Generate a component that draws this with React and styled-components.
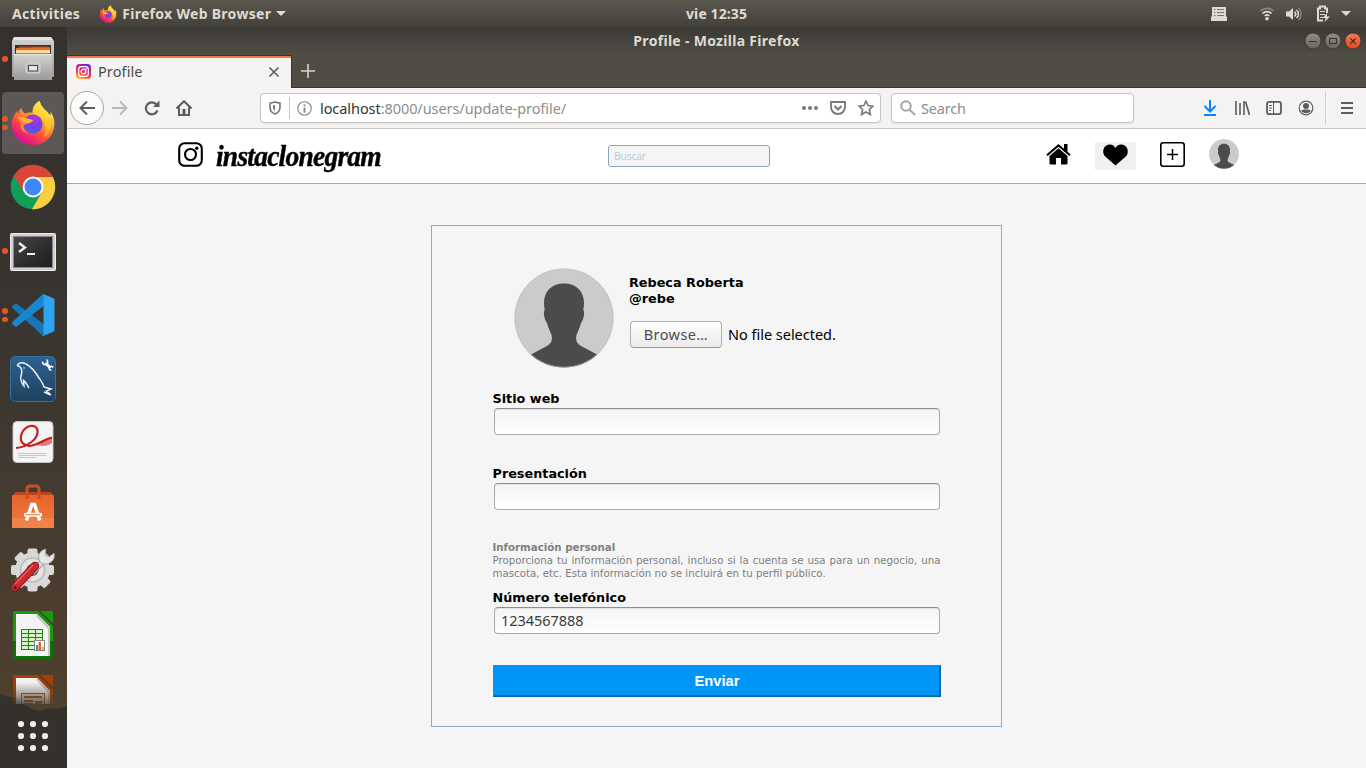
import React from "react";
import styled, { createGlobalStyle } from "styled-components";

const Global = createGlobalStyle`
  * { box-sizing: border-box; }
  body { margin: 0; background: #f5f5f5; overflow: hidden; font-family: "Noto Sans", "Open Sans", sans-serif; }
  svg { display: block; flex: none; }
  input, button { font-family: inherit; outline: none; }
`;

/* ---------- desktop shell ---------- */
const Desktop = styled.div`
  width: 1366px; height: 768px; display: flex; flex-direction: column; overflow: hidden;
`;
const TopBar = styled.header`
  height: 27px; flex: none; display: grid; grid-template-columns: 686px auto 1fr; align-items: center;
  background: linear-gradient(#5a574d, #42413b); color: #dfdbd2;
  font-size: 14px; font-weight: 700; white-space: nowrap;
`;
const TopLeft = styled.div`
  display: flex; align-items: center; padding-left: 12px;
`;
const TopText = styled.span`
  letter-spacing: ${(p) => p.$ls || 0}px;
  line-height: 20px;
`;
const AppName = styled.div`
  display: flex; align-items: center; gap: 5px; margin-left: 19px;
`;
const TopRight = styled.div`
  display: flex; align-items: center; justify-content: flex-end; padding-right: 15px;
`;
const StatusIcon = styled.span`
  display: flex; margin-left: ${(p) => p.$gap}px;
`;
const Workspace = styled.div`
  flex: 1; display: flex; min-height: 0;
`;

/* ---------- dock ---------- */
const Dock = styled.nav`
  width: 67px; flex: none; display: flex; flex-direction: column; position: relative;
  background: linear-gradient(#33302d 0, #37332f 230px, #3f3831 400px, #4a3d2f 560px, #4d402d 680px);
`;
const Mountain = styled.svg`
  position: absolute; left: 0; bottom: 0;
`;
const DockList = styled.div`
  height: 677px; overflow: hidden; position: relative;
  mask-image: linear-gradient(#000 655px, rgba(0, 0, 0, 0.2) 677px);
`;
const DockItem = styled.div`
  height: 64px; display: flex; align-items: center; justify-content: center; position: relative;
  padding-right: 1px;
`;
const DockFrame = styled.div`
  width: 62px; height: 62px; border-radius: 4px; display: flex; align-items: center; justify-content: center;
  background: ${(p) => (p.$active ? "#5b5855" : "transparent")};
`;
const Dots = styled.div`
  position: absolute; left: 2px; top: 0; height: 64px; display: flex; flex-direction: column;
  justify-content: center; gap: 3px;
`;
const Dot = styled.i`
  width: 5.5px; height: 5.5px; border-radius: 50%; background: #e95420;
`;
const AppsButton = styled.div`
  flex: 1; display: flex; align-items: center; justify-content: center; position: relative; padding-right: 1px;
`;

/* ---------- browser window ---------- */
const Window = styled.section`
  flex: 1; display: flex; flex-direction: column; min-width: 0; background: #f5f5f5;
`;
const TitleBar = styled.div`
  height: 28px; flex: none; display: grid; grid-template-columns: 1fr auto 1fr; align-items: center;
  background: linear-gradient(#3a3935, #504d45);
  color: #dfdbd2; font-size: 14px; font-weight: 700;
`;
const WinTitle = styled.span`letter-spacing: 0.3px; line-height: 20px;`;
const WinButtons = styled.div`
  display: flex; justify-content: flex-end; gap: 2px; padding-right: 4px;
`;
const TabStrip = styled.div`
  height: 33px; flex: none; display: flex; background: #504d45; border-bottom: 1px solid #35342f;
`;
const Tab = styled.div`
  width: 225px; height: 33px; display: flex; align-items: center; padding: 0 10px 1px 9px;
  background: #f4f3f2; border-top: 1px solid #35342f; border-right: 1px solid #35342f;
  box-shadow: inset 0 2px #ee7745;
  color: #4c4c4c; font-size: 14.5px;
`;
const TabTitle = styled.span`
  flex: 1; margin-left: 7px; letter-spacing: 0.1px; line-height: 20px; padding-bottom: 1px;
`;
const NewTab = styled.div`
  display: flex; align-items: center; padding: 0 0 1px 9px;
`;
const NavBar = styled.div`
  height: 41px; flex: none; display: flex; align-items: center; background: #f4f3f2;
  border-bottom: 1px solid #c9c6c3; padding-left: 3px;
`;
const BackButton = styled.div`
  width: 34px; height: 34px; border: 1px solid #a9a6a3; border-radius: 50%; background: #fcfcfc;
  display: flex; align-items: center; justify-content: center;
`;
const NavIcon = styled.div`
  display: flex; margin-left: ${(p) => p.$gap}px;
`;
const Field = styled.div`
  width: ${(p) => p.$w}px; height: 30px; margin-left: ${(p) => p.$gap}px; background: #fff;
  border: 1px solid #c6c3c0; border-radius: 4px; display: flex; align-items: center;
  box-shadow: 0 1px 2px rgba(0, 0, 0, 0.06); font-size: 14.5px; line-height: 20px; color: #8d8d8d;
`;
const Divider = styled.i`
  width: 1px; height: ${(p) => p.$h}px; background: ${(p) => p.$c || "#c6c6c6"}; margin-left: ${(p) => p.$gap}px;
`;
const Url = styled.span`
  flex: 1; margin-left: 8px; letter-spacing: -0.07px; white-space: nowrap;
  b { font-weight: 400; color: #333; }
`;
const SearchText = styled.span`margin-left: 5px; letter-spacing: -0.2px; color: #8d8d8d;`;

/* ---------- page ---------- */
const SiteHeader = styled.header`
  height: 55px; flex: none; background: #fff; border-bottom: 1px solid #8dadc2;
  display: flex; align-items: center; padding: 0 127px 0 111px;
`;
const Brand = styled.div`
  width: 430px; display: flex; align-items: center; gap: 13px; padding-bottom: 3px;
`;
const BrandName = styled.span`
  font-family: "Liberation Serif", serif; font-weight: 700; font-style: italic; font-size: 28.5px; line-height: 34px;
  color: #000; letter-spacing: -0.8px; transform-origin: 0 50%; transform: scaleX(0.965); white-space: nowrap;
  -webkit-text-stroke: 0.4px #000; padding-top: 4px;
`;
const SiteSearch = styled.input`
  width: 162px; height: 22px; padding: 0 5px; background: #f5f5f5; border: 1px solid #84a7c1; border-radius: 3px;
  font-size: 10.3px; letter-spacing: -0.2px;
  &::placeholder { color: #b2cfdf; opacity: 1; }
`;
const SiteNav = styled.div`
  margin-left: auto; display: flex; align-items: center; padding-bottom: 4px;
`;
const HeartButton = styled.div`
  width: 41px; height: 28px; margin: 4px 24px 0 24px; background: #f1f0ef; display: flex; align-items: center;
  justify-content: center; padding-bottom: 3px;
`;
const AvatarSlot = styled.div`margin-left: 24px; display: flex;`;
const Card = styled.form`
  width: 571px; height: 502px; margin: 41px 0 0 364px; border: 1px solid #8fadc0; padding: 42px 60px 0 61px;
  font-family: "DejaVu Sans", sans-serif; color: #000; display: flex; flex-direction: column;
`;
const ProfileRow = styled.div`
  display: flex; padding-left: 21px; height: 122px; gap: 15px;
`;
const Identity = styled.div`
  padding-top: 7px; font-weight: 700; font-size: 12.8px; line-height: 16px;
`;
const FileRow = styled.div`
  display: flex; align-items: center; gap: 6px; margin: 14px 0 0 1px; font: 400 14.5px/20px "Noto Sans", sans-serif;
`;
const BrowseButton = styled.button`
  width: 92px; height: 27px; padding: 0 0 2px; border: 1px solid #b4b1ad; border-bottom-color: #9b9995; border-radius: 4px;
  background: linear-gradient(#fff, #ecebe9); color: #4c4c4c; font-size: 14.5px; letter-spacing: 0.4px;
`;
const FileNote = styled.span`letter-spacing: -0.02px; padding-bottom: 2px;`;
const FormGroup = styled.label`
  display: block; height: ${(p) => p.$h}px; font-weight: 700; font-size: 12.8px; line-height: 16px;
  padding-top: ${(p) => p.$pt || 0}px; text-indent: -0.5px;
`;
const TextInput = styled.input`
  display: block; width: 446px; height: 27px; margin: 1px 0 0 1px; padding: 0 6px 1px; border: 1px solid #aaa;
  border-top-color: #8f8f8f; border-radius: 4px; background: linear-gradient(#f4f4f4, #fff);
  box-shadow: inset 0 1px 1px rgba(0, 0, 0, 0.07);
  font: 400 14.5px/20px "Noto Sans", sans-serif; color: #3c3c3c; letter-spacing: -0.05px;
`;
const Info = styled.div`
  height: 49px; width: 448px; font-size: 10.24px; line-height: 13px; color: #808080; text-align: justify;
  margin: 1px 0 0 -0.5px;
  strong { display: block; }
`;
const Submit = styled.button`
  width: 448px; height: 32px; border: 2px solid; border-color: #0095f6 #0068ac #0068ac #0095f6;
  background: #0095f6; color: #fff; font: 700 14.7px "Liberation Sans", Arial, sans-serif;
`;

/* ---------- icons ---------- */
const Person = ({ size, id }) => (
  <svg width={size} height={size} viewBox="0 0 100 100">
    <clipPath id={id}><circle cx="50" cy="50" r="49.5" /></clipPath>
    <circle cx="50" cy="50" r="49.5" fill="#cbcbcb" />
    <path clipPath={`url(#${id})`} fill="#4b4b4b" d="M50 15.500C62 15.500 70 23 70 35C70 38 69.500 40 69.300 42C71 44 70 51 67 55C65.500 60 64 63 62.500 67C61.500 72 62 75 67 78L84 87L80 101H20L16 87L33 78C38 75 38.500 72 37.500 67C36 63 34.500 60 33 55C30 51 29 44 30.700 42C30.500 40 30 38 30 35C30 23 38 15.500 50 15.500Z" />
    <circle cx="50" cy="50" r="49.2" fill="none" stroke="#c0c0c0" strokeWidth="0.6" />
  </svg>
);

const Firefox = ({ size, id }) => (
  <svg width={size} height={size} viewBox="0 0 46 48">
    <defs>
      <linearGradient id={id + "a"} x1="0.85" y1="0.1" x2="0.3" y2="0.95">
        <stop offset="0.05" stopColor="#fff44f" /><stop offset="0.35" stopColor="#ffa52c" />
        <stop offset="0.65" stopColor="#ff5338" /><stop offset="0.95" stopColor="#e31587" />
      </linearGradient>
      <linearGradient id={id + "b"} x1="0.7" y1="0" x2="0.4" y2="1">
        <stop offset="0" stopColor="#fff34a" /><stop offset="0.6" stopColor="#ffbd2c" /><stop offset="1" stopColor="#ff8038" />
      </linearGradient>
      <radialGradient id={id + "c"} cx="0.6" cy="0.25" r="0.8">
        <stop offset="0" stopColor="#b833e1" /><stop offset="0.5" stopColor="#7542e5" /><stop offset="1" stopColor="#4a5bea" />
      </radialGradient>
    </defs>
    <path fill={`url(#${id}a)`} d="M30 1C31 8 38 11 41 16C42 14 41 12 41 12C45 17 46 23 45 29C43 40 34 47 23 47C11 47 2 39 1 28C0 20 4 14 7 11C7 13 7 14 8 14C8 11 10 9 11 8C11 11 13 13 15 14C17 13 20 13 23 13C22 8 25 3 30 1Z" />
    <path fill={`url(#${id}b)`} d="M30 1C31 8 38 11 41 18C44 27 41 35 33 40C37 34 37 28 34 23C32 19 28 17 23 14C21 10 26 4 30 1Z" />
    <circle cx="23" cy="25" r="10" fill={`url(#${id}c)`} />
    <path fill="#ff8a2c" d="M6 18C12 17 15 19 23 21C22 23.500 19 24 16 25C13.500 26 12.500 27 13 29C14 32 16 34 19 35C14 35 10.500 32 10.500 28C10.500 24 9 21 6 18Z" />
    <path fill="#ffb13b" d="M7 18C13 17 15 19 23 21C22 23 19 24 16 24C12 23 11 21 7 18Z" />
  </svg>
);

const Files = () => (
  <svg width="44" height="46" viewBox="0 0 44 46">
    <defs>
      <linearGradient id="fg" x1="0" y1="0" x2="0" y2="1"><stop offset="0" stopColor="#d4d4d4" /><stop offset="1" stopColor="#9a9a9a" /></linearGradient>
    </defs>
    <path d="M3 1H40L43 5V41H1V5Z" fill="url(#fg)" />
    <path d="M3 1H40L42 4H2Z" fill="#e4e4e4" />
    <path d="M4 9H40V20H4Z" fill="#38322c" />
    <path d="M8 10.500H38V17H8Z" fill="#b94a1a" /><path d="M5 12H21L23 11.500H39V20H5Z" fill="#e86f22" />
    <path d="M5 14H39V17H5Z" fill="#ffdca0" />
    <path d="M3 18H41V44H3Z" fill="url(#fg)" /><path d="M3 18H41V19H3Z" fill="#e7e7e7" />
    <rect x="15" y="27" width="14" height="10" rx="2" fill="#bdbdbd" stroke="#d5d5d5" />
    <rect x="17.500" y="29.500" width="9" height="5.500" fill="#e5e5e5" stroke="#4a4a4a" />
  </svg>
);

const Chrome = () => (
  <svg width="46" height="46" viewBox="0 0 46 46">
    <circle cx="23" cy="23" r="22.300" fill="#109f59" />
    <path d="M3.700 12A22.300 22.300 0 0 1 42.300 12L43.200 14H23L14 28Z" fill="#db4437" />
    <path d="M42.800 13A22.300 22.300 0 0 1 22 45.200L32 28L23 13Z" fill="#ffcd40" />
    <circle cx="23" cy="23" r="10.400" fill="#fff" /><circle cx="23" cy="23" r="8.500" fill="#4285f4" />
  </svg>
);

const Terminal = () => (
  <svg width="46" height="43" viewBox="0 -3 46 43">
    <defs>
      <linearGradient id="tg" x1="0" y1="0" x2="1" y2="1"><stop offset="0" stopColor="#4a4a4a" /><stop offset="0.5" stopColor="#303030" /><stop offset="1" stopColor="#1d1d1d" /></linearGradient>
    </defs>
    <rect x="0.500" y="0.500" width="45" height="37" rx="1" fill="#cfcfcf" stroke="#ededed" />
    <rect x="3.500" y="3.500" width="39" height="31" fill="url(#tg)" stroke="#8a8a8a" />
    <path d="M9 10L15 14.500L9 19" fill="none" stroke="#f1f1f1" strokeWidth="2.300" />
    <path d="M17 21H25" stroke="#f1f1f1" strokeWidth="2" />
  </svg>
);

const VsCode = () => (
  <svg width="44" height="44" viewBox="0 0 44 44">
    <path d="M1.500 12.500L5 10.200L34 32L32 43L2 15.500C1 14.500 1 13.500 1.500 12.500Z" fill="#1576b8" />
    <path d="M1.500 31.500L5 34L34 12L32 1L2 28.500C1 29.500 1 30.500 1.500 31.500Z" fill="#1b86d0" />
    <path d="M32 1L42 5C43 5.500 43.500 6.500 43.500 7.500V36.500C43.500 37.500 43 38.500 42 39L32 43C31 43 32 42 32.500 41V3C32 2 31 1 32 1Z" fill="#2da3f2" />
  </svg>
);

const Dolphin = () => (
  <svg width="46" height="46" viewBox="0 0 46 46">
    <defs><linearGradient id="mg" x1="0" y1="0" x2="0" y2="1"><stop offset="0" stopColor="#2f6191" /><stop offset="1" stopColor="#1f415f" /></linearGradient></defs>
    <rect x="0.500" y="0.500" width="45" height="45" rx="5" fill="url(#mg)" stroke="#3372a4" />
    <path d="M7 9.500C9 6 13 6 16 8C22 11 26 17 29 22C31 25 33 27 34 31L41 33L36.500 35L41 39L34 36M7 9.500C11 10 12.500 14 11.500 18C10 22 11 27 14 30L13.500 24.500C16 26 17 29 19 32" fill="none" stroke="#e8f1f8" strokeWidth="1.500" />
    <circle cx="14" cy="12" r="0.800" fill="#e8f1f8" />
    <path d="M35.500 7L40.500 12" stroke="#fff" strokeWidth="3" />
    <path d="M32.500 5.500C32.500 8 34 9 36 8.500C38 8 38.500 5 36.500 3.500M43 11.500C42 9.800 40 10 39.300 11.500C38.700 13 39.800 14.500 41.500 14" fill="none" stroke="#fff" strokeWidth="1.500" />
  </svg>
);

const Document = () => (
  <svg width="42" height="46" viewBox="0 0 42 46">
    <rect x="1" y="1.500" width="40" height="41" rx="4" fill="#f4f4f4" stroke="#c4c4c4" />
    <path d="M40 17C32 18 26 23 19 26L23 24.500C29 27 36 26 40 23Z" fill="#e57b7b" />
    <path d="M4 28C15 27 27 19 25.500 10C24 3 13 5 9.500 14C7 22 12 27 20 25.500C28 24 33 19 40 17.500" fill="none" stroke="#c81e1e" strokeWidth="2.200" />
    <path d="M6 33.500H34M6 35.500H34M6 37.500H24" stroke="#c6c6c6" />
  </svg>
);

const Software = () => (
  <svg width="44" height="46" viewBox="0 0 44 46">
    <defs><linearGradient id="sg" x1="0" y1="0" x2="0" y2="1"><stop offset="0" stopColor="#e5622c" /><stop offset="1" stopColor="#f07a3d" /></linearGradient></defs>
    <path d="M5 8H39L43 12V44H1V12Z" fill="url(#sg)" /><path d="M5 8H39L42 11H2Z" fill="#b9441b" />
    <path d="M16 15V5Q16 2 19 2H25Q28 2 28 5V15" fill="none" stroke="#cf4e20" strokeWidth="3" />
    <path d="M1 34H43V44H1Z" fill="#f38a50" opacity="0.6" />
    <path d="M15.500 36.500L20.800 20.500H23.500L28.800 36.500" fill="none" stroke="#fff" strokeWidth="3.500" />
    <rect x="13.500" y="29.500" width="17" height="2.500" rx="1.200" fill="#ee7438" stroke="#fff" strokeWidth="1.500" />
  </svg>
);

const Settings = () => (
  <svg width="46" height="48" viewBox="0 0 46 48">
    <g transform="translate(22.500 23)" fill="#d8d8d8">
      {[0, 45, 90, 135].map((a) => <rect key={a} x="-5" y="-21.500" width="10" height="43" rx="2" transform={`rotate(${a})`} />)}
      <circle r="17.500" /><circle r="12" fill="#e3e3e3" stroke="#b9b9b9" strokeWidth="1.500" /><circle r="6" fill="#57504a" />
    </g>
    <path d="M22 26L34 13" stroke="#9d9d9d" strokeWidth="6" /><path d="M22 26L34 13" stroke="#dedede" strokeWidth="4" />
    <path d="M30 15C27 10 29 3 36 2L35 8L39 10L44 6C46 13 40 18 33 17Z" fill="#e6e6e6" stroke="#999" strokeWidth="0.800" />
    <path d="M5 40L25 19" stroke="#8d1319" strokeWidth="8.600" strokeLinecap="round" /><path d="M5 40L25 19" stroke="#cc2a2f" strokeWidth="6.800" strokeLinecap="round" />
    <path d="M5 37L23 18" stroke="#e66" strokeWidth="1.200" /><circle cx="5" cy="40.500" r="1.500" fill="#5c1111" />
  </svg>
);

const Office = ({ main, dark, children }) => (
  <svg width="40" height="48" viewBox="0 0 40 48">
    <path d="M2 0H25L40 15V46Q40 48 38 48H2Q0 48 0 46V2Q0 0 2 0Z" fill={dark} />
    <path d="M2 0H25L40 15V30H0V2Q0 0 2 0Z" fill={main} />
    <path d="M3 3H24L37 16V45H3Z" fill="#f3f3f3" /><path d="M24 3L37 16V45H35V18L23 5Z" fill="#c8c8c8" />
    <path d="M27 0H40V12Z" fill={main} />
    {children}
  </svg>
);
const CalcMark = () => (
  <>
    <rect x="8" y="18" width="22" height="21" fill="#23801a" />
    {[0, 1, 2, 3, 4].map((r) => [0, 1, 2].map((c) => <rect key={`${r}${c}`} x={9 + c * 7} y={19 + r * 4} width="6" height="3" fill="#d7f3c9" />))}
    <rect x="21.500" y="29.500" width="10" height="10" fill="#fff" stroke="#888" />
    <path d="M23 34H25V39H23Z" fill="#3596cf" /><path d="M25.500 31H28V39H25.500Z" fill="#ec642d" /><path d="M28.500 36H31V39H28.500Z" fill="#f2b61c" />
  </>
);
const SlidesMark = () => (
  <>
    <rect x="8.500" y="18.500" width="23" height="18" fill="#efe4dc" stroke="#a9532a" />
    <path d="M11 22H29" stroke="#a9532a" strokeWidth="2" /><path d="M11 26H20M11 29H20" stroke="#7a4a34" strokeWidth="2" /><rect x="22" y="26" width="7" height="6" fill="#666" />
  </>
);

const InstagramMini = () => (
  <svg width="15" height="15" viewBox="0 0 15 15">
    <defs>
      <linearGradient id="ig" x1="0.25" y1="1" x2="0.7" y2="0"><stop offset="0" stopColor="#ffc24a" /><stop offset="0.3" stopColor="#f9503a" /><stop offset="0.6" stopColor="#d42a83" /><stop offset="1" stopColor="#7a1ed0" /></linearGradient>
    </defs>
    <rect width="15" height="15" rx="3.500" fill="url(#ig)" />
    <rect x="2.700" y="2.700" width="9.600" height="9.600" rx="2.600" fill="none" stroke="#fff" strokeWidth="1.200" /><circle cx="7.500" cy="7.500" r="2.300" fill="none" stroke="#fff" strokeWidth="1.200" /><circle cx="10.300" cy="4.700" r="0.700" fill="#fff" />
  </svg>
);

const Stroke = ({ w = 16, h = 16, c = "#5c5c5c", s = 1.8, children }) => (
  <svg width={w} height={h} viewBox={`0 0 ${w} ${h}`} fill="none" stroke={c} strokeWidth={s}>{children}</svg>
);

const WinButton = ({ kind }) => (
  <svg width="18" height="18" viewBox="0 0 18 18">
    <defs>
      <linearGradient id={"w" + kind} x1="0" y1="0" x2="0" y2="1">
        <stop offset="0" stopColor={kind === "close" ? "#f37e58" : "#918f86"} /><stop offset="1" stopColor={kind === "close" ? "#e0491a" : "#66645c"} />
      </linearGradient>
    </defs>
    <circle cx="9" cy="9" r="8" fill={`url(#w${kind})`} stroke="#35342f" strokeWidth="0.800" />
    {kind === "min" && <path d="M5 9.500H13" stroke="#35342f" />}
    {kind === "max" && <rect x="5.500" y="6.500" width="7" height="5" fill="none" stroke="#35342f" />}
    {kind === "close" && <path d="M6.300 6.300L11.700 11.700M11.700 6.300L6.300 11.700" stroke="#41251a" strokeWidth="1.200" />}
  </svg>
);

const DOCK = [
  { icon: <Files />, dots: 1 },
  { icon: <Firefox size={46} id="fd" />, dots: 2, active: true },
  { icon: <Chrome />, dots: 0 },
  { icon: <Terminal />, dots: 1 },
  { icon: <VsCode />, dots: 2 },
  { icon: <Dolphin />, dots: 0 },
  { icon: <Document />, dots: 0 },
  { icon: <Software />, dots: 0 },
  { icon: <Settings />, dots: 0 },
  { icon: <Office main="#189a0c" dark="#117007"><CalcMark /></Office>, dots: 0 },
  { icon: <Office main="#a63f07" dark="#8a3608"><SlidesMark /></Office>, dots: 0 },
];

function DesktopBar() {
  return (
    <TopBar>
      <TopLeft>
        <TopText $ls={0.32}>Activities</TopText>
        <AppName>
          <Firefox size={18} id="ft" />
          <TopText $ls={0.3}>Firefox Web Browser</TopText>
          <svg width="10" height="5" viewBox="0 0 10 5"><path d="M0 0H10L5 5Z" fill="#dfdbd2" /></svg>
        </AppName>
      </TopLeft>
      <TopText $ls={0.1}>vie 12:35</TopText>
      <TopRight>
        <StatusIcon $gap={0}>
          <svg width="16" height="15" viewBox="0 0 16 15"><path d="M1 1H15V10L16 11V15H0V11L1 10Z" fill="#dfdbd2" /><path d="M3 3.500H4.500M6 3.500H13M3 6.500H4.500M6 6.500H13M3 9.500H4.500M6 9.500H13" stroke="#77756c" /></svg>
        </StatusIcon>
        <StatusIcon $gap={33}>
          <Stroke w={14} h={14} c="#dfdbd2" s={1.6}><path d="M0.500 4C4 0.500 10 0.500 13.500 4" opacity="0.4" /><path d="M2.500 6.500C5 4 9 4 11.500 6.500" /><path d="M4.700 9C6 7.700 8 7.700 9.300 9" /><circle cx="7" cy="11.800" r="1.800" fill="#dfdbd2" stroke="none" /></Stroke>
        </StatusIcon>
        <StatusIcon $gap={12}>
          <Stroke w={16} h={14} c="#dfdbd2" s={1.5}><path d="M0 4.500H3L7 1V13L3 9.500H0Z" fill="#dfdbd2" stroke="none" /><path d="M8.500 4.500C10 6 10 8 8.500 9.500M10.500 3C13 5 13 9 10.500 11" /><path d="M12.500 1C16 4 16 10 12.500 13" opacity="0.4" /></Stroke>
        </StatusIcon>
        <StatusIcon $gap={14}>
          <Stroke w={15} h={17} c="#dfdbd2" s={2}><path d="M7 15.500H2V3.500H4V1.500H9V3.500H11V8" /><path d="M4 6.500H9M4 9.500H9M4 12.500H7" strokeWidth="1" /><path d="M11 8L6.500 13H9.500L8.500 17L14 11.500H11Z" fill="#dfdbd2" stroke="none" /></Stroke>
        </StatusIcon>
        <StatusIcon $gap={10}>
          <svg width="10" height="5" viewBox="0 0 10 5"><path d="M0 0H10L5 5Z" fill="#dfdbd2" /></svg>
        </StatusIcon>
      </TopRight>
    </TopBar>
  );
}

function Launcher() {
  return (
    <Dock>
      <Mountain width="67" height="76" viewBox="0 0 67 76">
        <path d="M0 2L8 5L18 6L25 13L32 17L40 19L49 16L57 17L67 14V76H0Z" fill="#34312d" />
      </Mountain>
      <DockList>
        {DOCK.map((d, i) => (
          <DockItem key={i}>
            <Dots>{Array.from({ length: d.dots }, (_, k) => <Dot key={k} />)}</Dots>
            <DockFrame $active={d.active}>{d.icon}</DockFrame>
          </DockItem>
        ))}
      </DockList>
      <AppsButton>
        <svg width="32" height="32" viewBox="0 0 32 32" fill="#efedea">
          {[4, 16, 28].map((y) => [4, 16, 28].map((x) => <circle key={`${x}-${y}`} cx={x} cy={y} r="3.100" />))}
        </svg>
      </AppsButton>
    </Dock>
  );
}

function BrowserChrome() {
  return (
    <>
      <TitleBar>
        <span />
        <WinTitle>Profile - Mozilla Firefox</WinTitle>
        <WinButtons><WinButton kind="min" /><WinButton kind="max" /><WinButton kind="close" /></WinButtons>
      </TitleBar>
      <TabStrip>
        <Tab>
          <InstagramMini />
          <TabTitle>Profile</TabTitle>
          <Stroke w={14} h={14} s={1.6}><path d="M2.500 2.500L11.500 11.500M11.500 2.500L2.500 11.500" /></Stroke>
        </Tab>
        <NewTab><Stroke w={14} h={14} c="#d5d3cd" s={1.6}><path d="M7 0V14M0 7H14" /></Stroke></NewTab>
      </TabStrip>
      <NavBar>
        <BackButton><Stroke s={2}><path d="M16 8H1.500M8 1.500L1.500 8L8 14.500" /></Stroke></BackButton>
        <NavIcon $gap={8}><Stroke s={1.8} c="#b9b8b7"><path d="M0 8H14.500M8 1.500L14.500 8L8 14.500" /></Stroke></NavIcon>
        <NavIcon $gap={16}><Stroke s={2.1}><path d="M13.500 10.500A6 6 0 1 1 12.500 4.500" /><path d="M15.500 0.500V7H9Z" fill="#5c5c5c" stroke="none" /></Stroke></NavIcon>
        <NavIcon $gap={16}><Stroke s={2}><path d="M0.500 8.500L8 1.200L15.500 8.500M3 7.500V15H13V7.500" /><path d="M6.500 9H9.500V15H6.500Z" fill="#5c5c5c" stroke="none" /></Stroke></NavIcon>
        <Field $w={621} $gap={68}>
          <NavIcon $gap={8}><Stroke w={12} h={14} c="#777" s={1.6}><path d="M6 1L11 2.200V6C11 9.500 9 12 6 13C3 12 1 9.500 1 6V2.200Z" /><path d="M6 4V10C4.500 9 4 7.500 4 6V4.500Z" fill="#777" stroke="none" /></Stroke></NavIcon>
          <Divider $h={22} $gap={8} />
          <NavIcon $gap={7}><Stroke w={15} h={15} c="#858585" s={1.1}><circle cx="7.500" cy="7.500" r="6.700" /><path d="M7.500 6.500V11.500M7.500 3.500V5.300" strokeWidth="1.900" /></Stroke></NavIcon>
          <Url><b>localhost</b>:8000/users/update-profile/</Url>
          <svg width="16" height="4" viewBox="0 0 16 4" fill="#777"><circle cx="2" cy="2" r="2" /><circle cx="8" cy="2" r="2" /><circle cx="14" cy="2" r="2" /></svg>
          <NavIcon $gap={12}><Stroke h={14} c="#777" s={1.8}><path d="M1 1H15V6C15 10 12 13 8 13C4 13 1 10 1 6Z" /><path d="M4.500 5L8 8.500L11.500 5" strokeWidth="2" /></Stroke></NavIcon>
          <NavIcon $gap={12}><Stroke c="#777" s={1.6}><path d="M8 1L10.100 5.500L15 6.100L11.400 9.500L12.400 14.500L8 12L3.600 14.500L4.600 9.500L1 6.100L5.900 5.500Z" /></Stroke></NavIcon>
          <Divider $h={0} $gap={5} />
        </Field>
        <Field $w={243} $gap={10}>
          <NavIcon $gap={8}><Stroke c="#a5a5a5" s={2}><circle cx="6" cy="6" r="4.800" /><path d="M9.500 9.500L15 15" /></Stroke></NavIcon>
          <SearchText>Search</SearchText>
        </Field>
        <NavIcon $gap={68}><Stroke c="#0a84ff" s={2}><path d="M8 0V11M2.500 6L8 11.500L13.500 6M2 15H14" /></Stroke></NavIcon>
        <NavIcon $gap={16}><Stroke s={2}><path d="M2 1V15M6 3V15M10 1V15" strokeWidth="1.600" /><path d="M11.500 1.500L15.500 15" strokeWidth="1.700" /></Stroke></NavIcon>
        <NavIcon $gap={16}><Stroke s={1.8}><rect x="1" y="1.900" width="14" height="12.200" rx="2" /><path d="M7.500 2V14" strokeWidth="1" /><path d="M3 5.500H6M3 8H6M3 10.500H5" strokeWidth="1" /></Stroke></NavIcon>
        <NavIcon $gap={16}><Stroke s={1.2}><circle cx="8" cy="8" r="6.800" /><circle cx="8" cy="6" r="3" fill="#5c5c5c" stroke="none" /><path d="M3 10.500C5 9 11 9 13 10.500C11 14 5 14 3 10.500Z" fill="#5c5c5c" stroke="none" /></Stroke></NavIcon>
        <Divider $h={34} $gap={11} $c="#d5d3d1" />
        <NavIcon $gap={13}><Stroke s={2}><path d="M2 3H14M2 8H14M2 13H14" /></Stroke></NavIcon>
      </NavBar>
    </>
  );
}

function SiteBar() {
  return (
    <SiteHeader>
      <Brand>
        <Stroke w={25} h={25} c="#000" s={2.1}><rect x="1.200" y="1.200" width="22.600" height="22.600" rx="5.500" /><circle cx="12.500" cy="12.500" r="5.500" /><circle cx="18.800" cy="6.300" r="1.700" fill="#000" stroke="none" /></Stroke>
        <BrandName>instaclonegram</BrandName>
      </Brand>
      <SiteSearch placeholder="Buscar" />
      <SiteNav>
        <svg width="25" height="22" viewBox="0 0 25 22"><path d="M12.500 1L0.300 11.500L1.700 13L12.500 3.800L23.300 13L24.700 11.500L21.500 8.700V1H18V5.700Z" /><path d="M12.500 5.300L3.500 13V20.500Q3.500 21.500 4.500 21.500H10V15H15V21.500H20.500Q21.500 21.500 21.500 20.500V13Z" /></svg>
        <HeartButton><svg width="25" height="22" viewBox="0 0 25 22"><path d="M12.500 21.500L2.200 12.500C-0.800 9.500-0.300 4 3 1.800C6.200-0.300 10.500 0.300 12.500 4C14.500 0.300 18.800-0.300 22 1.800C25.300 4 25.800 9.500 22.800 12.500Z" /></svg></HeartButton>
        <Stroke w={25} h={25} c="#000" s={1.6}><rect x="0.800" y="0.800" width="23.400" height="23.400" rx="2.500" /><path d="M12.500 7V18M7 12.500H18" strokeWidth="1.500" /></Stroke>
        <AvatarSlot><Person size={30} id="ps" /></AvatarSlot>
      </SiteNav>
    </SiteHeader>
  );
}

function ProfileForm() {
  return (
    <Card>
      <ProfileRow>
        <Person size={100} id="pl" />
        <Identity>
          <div>Rebeca Roberta</div>
          <div>@rebe</div>
          <FileRow>
            <BrowseButton type="button">Browse…</BrowseButton>
            <FileNote>No file selected.</FileNote>
          </FileRow>
        </Identity>
      </ProfileRow>
      <FormGroup $h={75} $pt={1}>Sitio web<TextInput defaultValue="" /></FormGroup>
      <FormGroup $h={75} $pt={1}>Presentación<TextInput defaultValue="" /></FormGroup>
      <Info>
        <strong>Información personal</strong>
        Proporciona tu información personal, incluso si la cuenta se usa para un negocio, una mascota, etc. Esta información no se incluirá en tu perfil público.
      </Info>
      <FormGroup $h={75}>Número telefónico<TextInput defaultValue="1234567888" /></FormGroup>
      <Submit type="button">Enviar</Submit>
    </Card>
  );
}

export default function App() {
  return (
    <>
      <Global />
      <Desktop>
        <DesktopBar />
        <Workspace>
          <Launcher />
          <Window>
            <BrowserChrome />
            <SiteBar />
            <ProfileForm />
          </Window>
        </Workspace>
      </Desktop>
    </>
  );
}
